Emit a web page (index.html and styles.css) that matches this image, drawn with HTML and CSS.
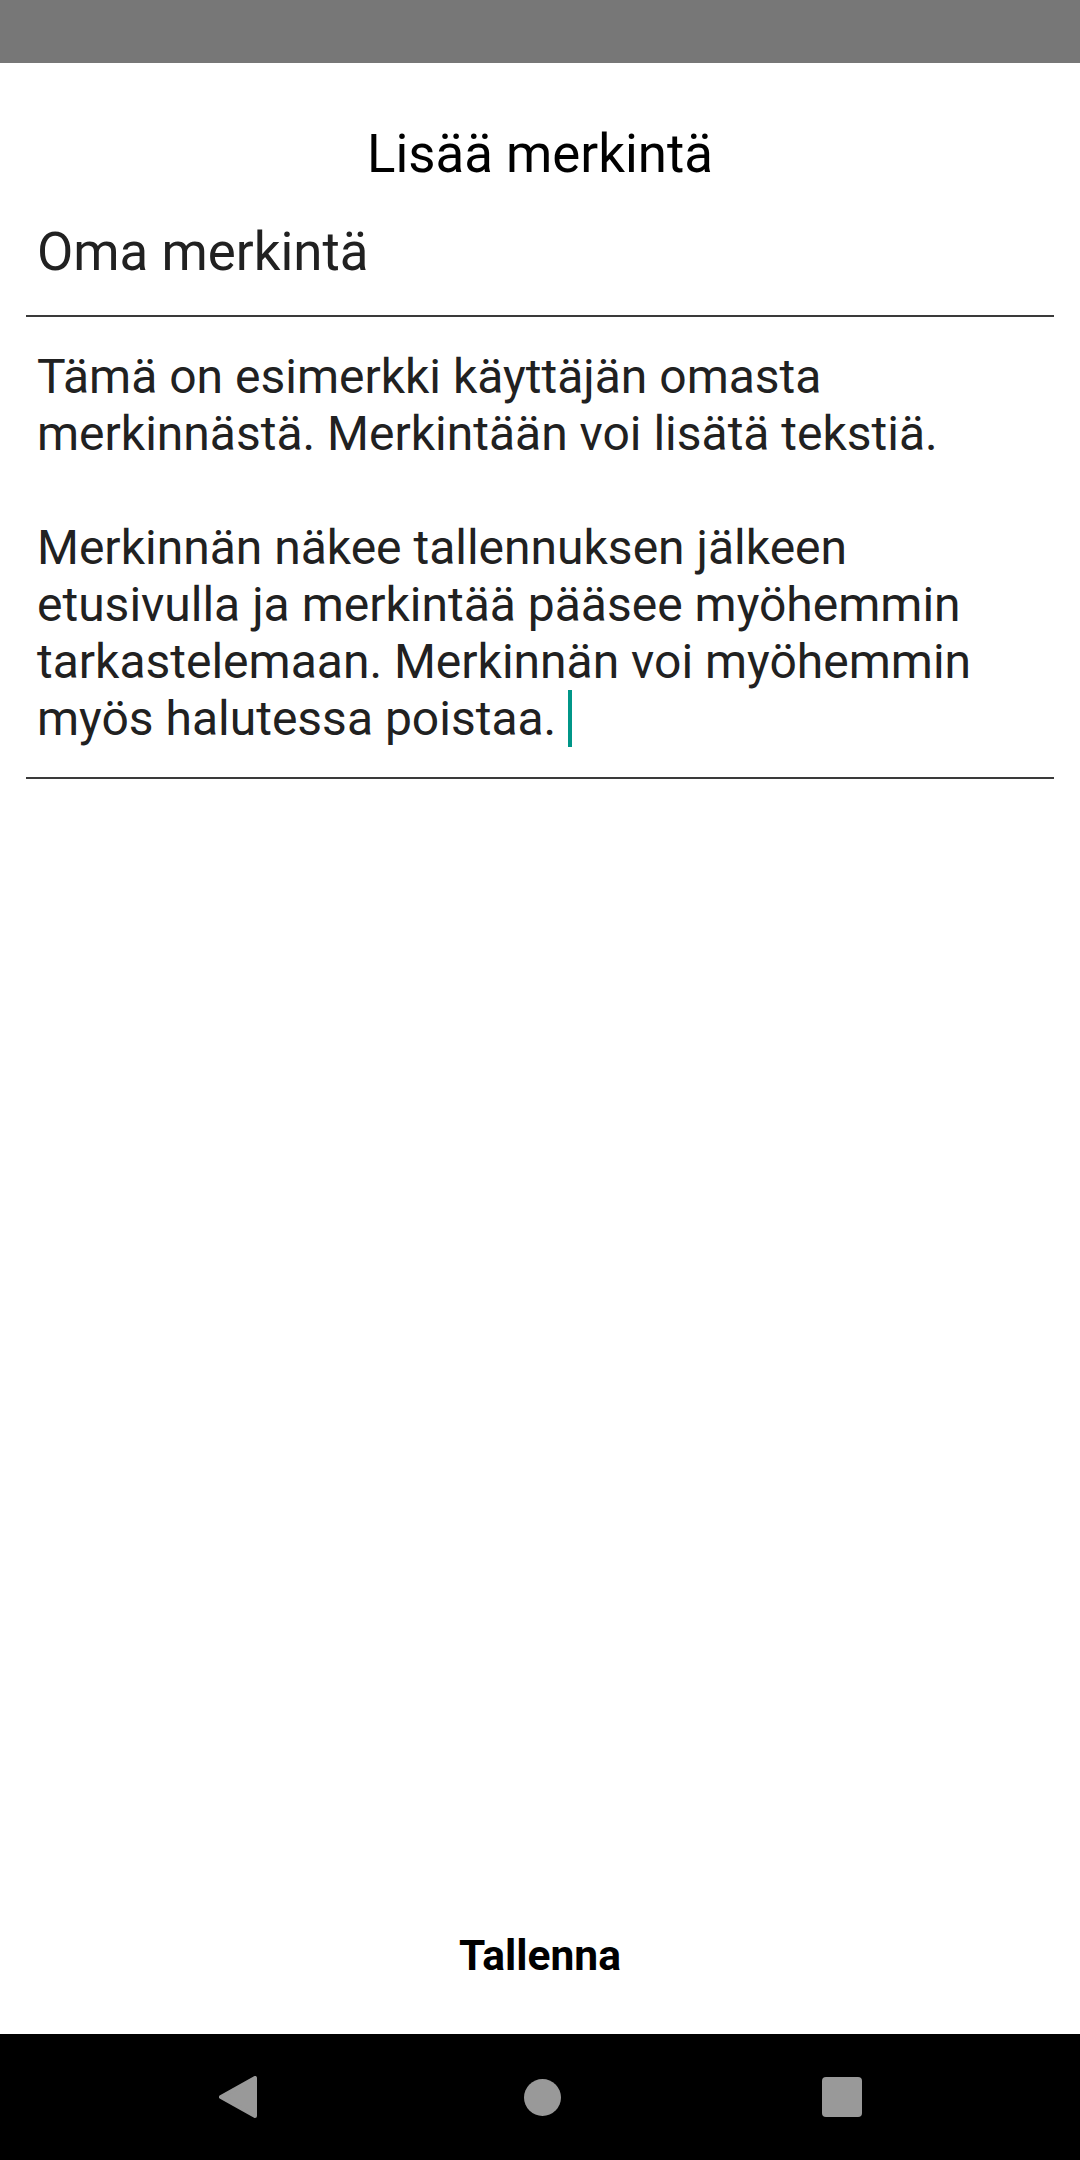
FILE: index.html
```html
<!DOCTYPE html>
<html lang="fi">
<head>
<meta charset="utf-8">
<title>Lisää merkintä</title>
<link rel="stylesheet" href="styles.css">
</head>
<body>
<div class="screen">
  <div class="status-bar"></div>
  <main class="content">
    <h1 class="title">Lisää merkintä</h1>
    <div class="field field-title">Oma merkintä</div>
    <div class="field field-body">Tämä on esimerkki käyttäjän omasta<br>merkinnästä. Merkintään voi lisätä tekstiä.<br><br>Merkinnän näkee tallennuksen jälkeen<br>etusivulla ja merkintää pääsee myöhemmin<br>tarkastelemaan. Merkinnän voi myöhemmin<br>myös halutessa poistaa. <span class="caret"></span></div>
  </main>
  <div class="actions">
    <button class="save-btn" type="button">Tallenna</button>
  </div>
  <nav class="nav-bar">
    <svg class="nav-back" width="38" height="42" viewBox="0 0 38 42"><polygon points="36,2 36,40 2,21" fill="#999" stroke="#999" stroke-width="4" stroke-linejoin="round"/></svg>
    <svg class="nav-home" width="37" height="37" viewBox="0 0 37 37"><circle cx="18.5" cy="18.5" r="18.5" fill="#999"/></svg>
    <svg class="nav-recent" width="40" height="40" viewBox="0 0 40 40"><rect x="0" y="0" width="40" height="40" rx="4" fill="#999"/></svg>
  </nav>
</div>
</body>
</html>
```

FILE: styles.css
```css
html, body {
  margin: 0;
  padding: 0;
  background: #fff;
}

.screen {
  width: 1080px;
  height: 2160px;
  display: flex;
  flex-direction: column;
  font-family: Roboto, "Liberation Sans", sans-serif;
}

.status-bar {
  height: 63px;
  background: #777777;
  flex: none;
}

.content {
  flex: 1;
  display: flex;
  flex-direction: column;
  padding: 0 26px;
}

.title {
  margin: 60px 0 0;
  font-size: 52.8px;
  line-height: 62px;
  font-weight: 400;
  color: #000;
  text-align: center;
}

.field {
  padding: 0 11px;
  color: #212121;
  border-bottom: 2px solid #3a3a3a;
}

.field-title {
  margin-top: 36px;
  font-size: 52.8px;
  line-height: 62px;
  padding-bottom: 32px;
}

.field-body {
  font-size: 48px;
  line-height: 57px;
  padding-top: 31px;
  padding-bottom: 30px;
}

.caret {
  display: inline-block;
  width: 4px;
  height: 57px;
  background: #009688;
  vertical-align: top;
}

.actions {
  flex: none;
  display: flex;
  justify-content: center;
  padding-bottom: 53px;
}

.save-btn {
  border: none;
  background: transparent;
  padding: 0;
  font-family: Roboto, "Liberation Sans", sans-serif;
  font-size: 42.5px;
  line-height: 50px;
  font-weight: 700;
  color: #000;
}

.nav-bar {
  flex: none;
  height: 126px;
  background: #000;
  display: flex;
  align-items: center;
  justify-content: center;
}

.nav-back {
  margin-right: 267px;
}

.nav-home {
  margin-right: 261px;
}
```
